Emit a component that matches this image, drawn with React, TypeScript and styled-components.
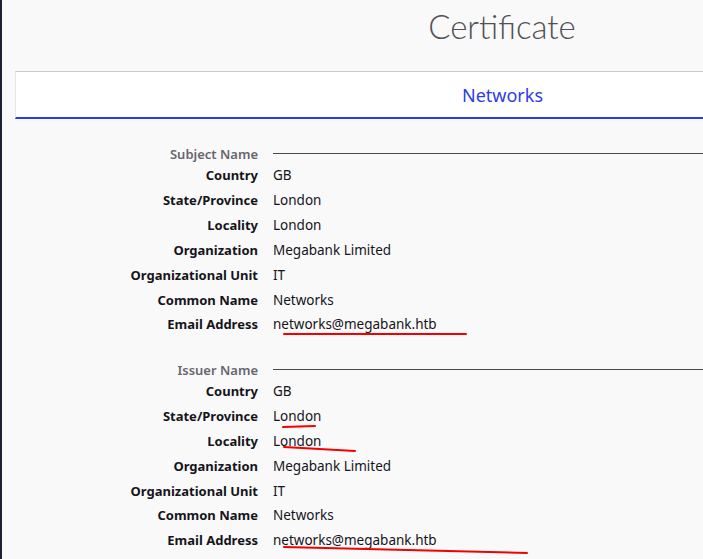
import styled, { createGlobalStyle } from 'styled-components';

const GlobalStyle = createGlobalStyle`
  html, body {
    margin: 0;
    padding: 0;
    background: #f9f9fa;
    overflow: hidden;
  }
  body {
    font-family: 'Noto Sans', 'DejaVu Sans', sans-serif;
    color: #15141a;
  }
`;

interface Field {
  label: string;
  value: string;
}

interface Section {
  title: string;
  fields: Field[];
}

const sections: Section[] = [
  {
    title: 'Subject Name',
    fields: [
      { label: 'Country', value: 'GB' },
      { label: 'State/Province', value: 'London' },
      { label: 'Locality', value: 'London' },
      { label: 'Organization', value: 'Megabank Limited' },
      { label: 'Organizational Unit', value: 'IT' },
      { label: 'Common Name', value: 'Networks' },
      { label: 'Email Address', value: 'networks@megabank.htb' },
    ],
  },
  {
    title: 'Issuer Name',
    fields: [
      { label: 'Country', value: 'GB' },
      { label: 'State/Province', value: 'London' },
      { label: 'Locality', value: 'London' },
      { label: 'Organization', value: 'Megabank Limited' },
      { label: 'Organizational Unit', value: 'IT' },
      { label: 'Common Name', value: 'Networks' },
      { label: 'Email Address', value: 'networks@megabank.htb' },
    ],
  },
];

// hand-drawn red marks over the screenshot
const marks = [
  { x1: 284, y1: 334, x2: 466, y2: 334 },
  { x1: 283, y1: 427, x2: 315, y2: 426 },
  { x1: 284, y1: 447, x2: 355, y2: 451 },
  { x1: 284, y1: 547, x2: 527, y2: 553 },
];

const App = () => {
  return (
    <Frame>
      <GlobalStyle />
      <Content>
        <Title>Certificate</Title>
        <TabBar>
          <Tab>Networks</Tab>
        </TabBar>
        {sections.map((section) => (
          <InfoGroup key={section.title}>
            <GroupHeader>
              <HeaderLabel>{section.title}</HeaderLabel>
              <HeaderRule />
            </GroupHeader>
            {section.fields.map((field) => (
              <Row key={field.label}>
                <Label>{field.label}</Label>
                <Value>{field.value}</Value>
              </Row>
            ))}
          </InfoGroup>
        ))}
      </Content>
      <Marks width="703" height="559">
        {marks.map((m, i) => (
          <line
            key={i}
            x1={m.x1}
            y1={m.y1}
            x2={m.x2}
            y2={m.y2}
            stroke="#f50000"
            strokeWidth="2"
            strokeLinecap="round"
          />
        ))}
      </Marks>
    </Frame>
  );
};

export default App;

const Frame = styled.div`
  position: relative;
  width: 703px;
  height: 559px;
  overflow: hidden;
  border-left: 2px solid #1c2136;
  box-sizing: border-box;
`;

const Content = styled.div`
  width: 974px;
  margin-left: 13px;
`;

const Title = styled.h1`
  margin: 0 0 19px;
  font-family: Lato, 'Noto Sans', sans-serif;
  font-weight: 300;
  font-size: 33px;
  line-height: 52px;
  color: #505056;
  text-align: center;
`;

const TabBar = styled.div`
  display: flex;
  justify-content: center;
  align-items: center;
  height: 45px;
  background: #fff;
  border-top: 1px solid #cacacf;
  border-left: 1px solid #e6e6e8;
  border-bottom: 2px solid #2b3af2;
`;

const Tab = styled.div`
  font-size: 18px;
  color: #2d3ce6;
  padding-top: 1px;
`;

const InfoGroup = styled.div`
  display: flex;
  flex-direction: column;
  margin-top: 26px;
  & + & {
    margin-top: 24px;
  }
`;

const GroupHeader = styled.div`
  display: grid;
  grid-template-columns: 243px 1fr;
  column-gap: 15px;
  align-items: center;
  height: 18px;
`;

const HeaderLabel = styled.div`
  text-align: right;
  font-size: 13px;
  font-weight: 600;
  color: #66666e;
  white-space: nowrap;
`;

const HeaderRule = styled.div`
  height: 1px;
  background: #4a4a50;
  margin-top: -1px;
`;

const Row = styled.div`
  display: grid;
  grid-template-columns: 243px 1fr;
  column-gap: 15px;
  align-items: center;
  height: 24.83px;
`;

const Label = styled.div`
  text-align: right;
  font-size: 13px;
  font-weight: 700;
  white-space: nowrap;
`;

const Value = styled.div`
  font-size: 13.5px;
  white-space: nowrap;
`;

const Marks = styled.svg`
  position: absolute;
  left: -2px;
  top: 0;
  pointer-events: none;
`;
